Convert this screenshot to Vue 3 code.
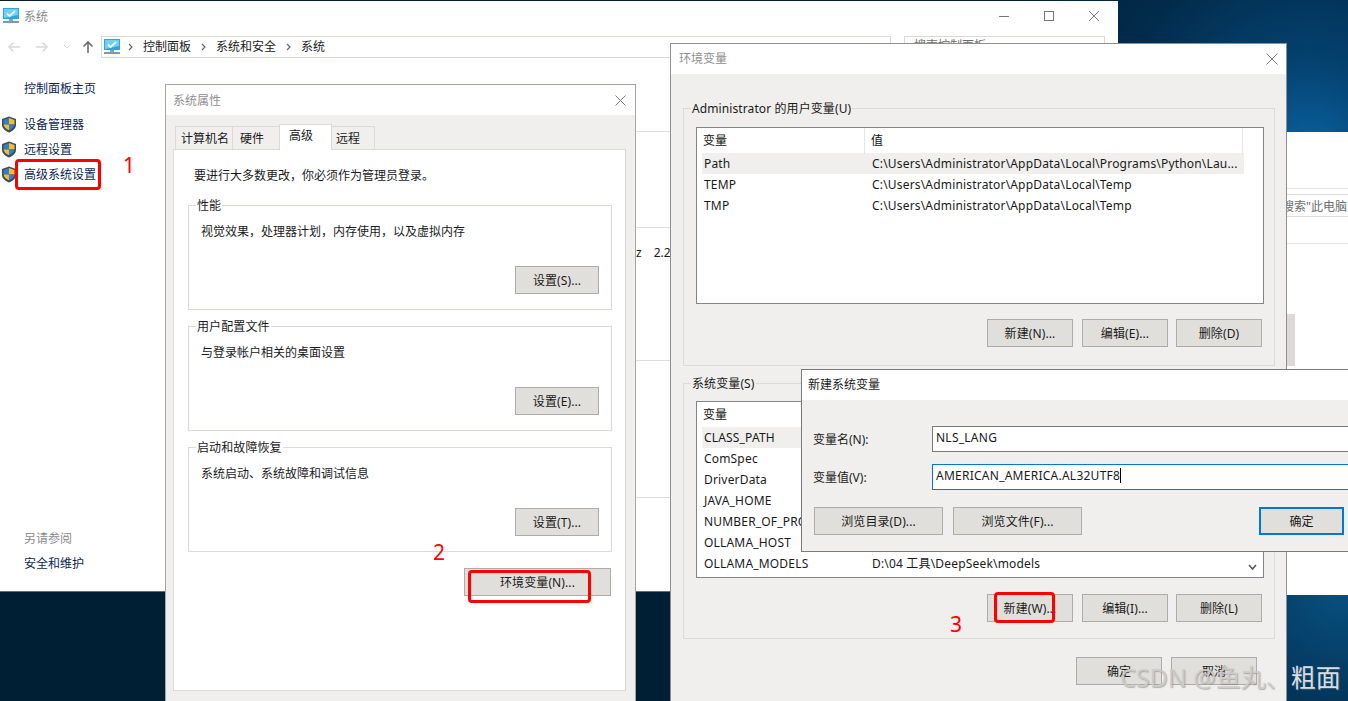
<template>
  <div class="desktop">
    <!-- window behind everything on the right -->
    <div class="back-window">
      <div class="back-line first"></div>
      <div class="back-search">搜索"此电脑</div>
      <div class="back-line second"></div>
      <div class="back-block"></div>
    </div>

    <!-- control panel -->
    <div class="main-window">
      <div class="main-title">
        <svg class="pc-icon" viewBox="0 0 16 16" width="16" height="16">
          <rect x="0" y="0" width="16" height="11" fill="#2aa5e8" />
          <path d="M1 1h14v6L1 10z" fill="#6fd0f7" />
          <path d="M4 5.500l2.600 2.600L12 3" fill="none" stroke="#fff" stroke-width="1.800" />
          <rect x="6" y="11" width="4" height="2" fill="#8fa3ad" />
          <rect x="0" y="13" width="16" height="2" fill="#7d9aa8" />
        </svg>
        <span class="main-name">系统</span>
        <div class="win-controls">
          <svg viewBox="0 0 10 10" width="10" height="10"><path d="M0 5.500h10" stroke="#777" /></svg>
          <svg viewBox="0 0 10 10" width="10" height="10"><rect x=".5" y=".5" width="9" height="9" fill="none" stroke="#777" /></svg>
          <svg viewBox="0 0 10 10" width="10" height="10"><path d="M0 0l10 10M10 0L0 10" stroke="#777" /></svg>
        </div>
      </div>

      <div class="nav-row">
        <div class="nav-arrows">
          <svg viewBox="0 0 14 12" width="14" height="12"><path d="M13 6H2M6.500 1.500L2 6l4.500 4.500" fill="none" stroke="#d8d8d8" stroke-width="1.500" /></svg>
          <svg viewBox="0 0 14 12" width="14" height="12"><path d="M1 6h11M7.500 1.500L12 6l-4.500 4.500" fill="none" stroke="#d8d8d8" stroke-width="1.500" /></svg>
          <svg viewBox="0 0 8 6" width="8" height="6"><path d="M1 1l3 3 3-3" fill="none" stroke="#d8d8d8" /></svg>
          <svg class="up-arrow" viewBox="0 0 12 14" width="12" height="14"><path d="M6 13V2M1.500 6.500L6 2l4.500 4.500" fill="none" stroke="#6e6e6e" stroke-width="1.600" /></svg>
        </div>
        <div class="crumbs">
          <svg class="pc-icon" viewBox="0 0 16 16" width="16" height="16">
            <rect x="0" y="0" width="16" height="11" fill="#2aa5e8" />
            <path d="M1 1h14v6L1 10z" fill="#6fd0f7" />
            <path d="M4 5.500l2.600 2.600L12 3" fill="none" stroke="#fff" stroke-width="1.800" />
            <rect x="6" y="11" width="4" height="2" fill="#8fa3ad" />
            <rect x="0" y="13" width="16" height="2" fill="#7d9aa8" />
          </svg>
          <template v-for="c in crumbs" :key="c">
            <svg class="crumb-sep" viewBox="0 0 5 8" width="5" height="8"><path d="M1 1l3 3-3 3" fill="none" stroke="#666" stroke-width="1.200" /></svg>
            <span class="crumb">{{ c }}</span>
          </template>
        </div>
        <div class="search-box">搜索控制面板</div>
      </div>

      <div class="main-body">
        <aside class="sidebar">
          <a class="side-home">控制面板主页</a>
          <div v-for="s in sideLinks" :key="s" class="side-link">
            <svg viewBox="0 0 16 17" width="16" height="17">
              <path d="M8 .5l7 2.500v6c0 3.500-3.500 6-7 7.500-3.500-1.500-7-4-7-7.500V3z" fill="#3f4b57" />
              <path d="M8 2L2.500 4v4.500H8z" fill="#2f7fd0" />
              <path d="M8 2l5.500 2v4.500H8z" fill="#f5bd2e" />
              <path d="M8 8.500H2.500c.3 2.500 2.800 4.600 5.500 5.800z" fill="#f5bd2e" />
              <path d="M8 8.500h5.500c-.3 2.500-2.800 4.600-5.500 5.800z" fill="#2f7fd0" />
            </svg>
            <a>{{ s }}</a>
          </div>
          <div class="side-foot">
            <div class="side-muted">另请参阅</div>
            <a class="side-bottom">安全和维护</a>
          </div>
        </aside>
        <div class="content">
          <div class="content-row r0"></div>
          <div class="content-row r1"></div>
          <div class="content-row r2"><span>z</span><span>2.2</span></div>
          <div class="content-row r3"></div>
        </div>
      </div>
    </div>

    <!-- system properties -->
    <div class="dialog props-dialog">
      <div class="dlg-title muted">
        <span>系统属性</span>
        <svg viewBox="0 0 11 11" width="11" height="11"><path d="M.5.500l10 10M10.500.500l-10 10" stroke="#777" /></svg>
      </div>
      <div class="tabs">
        <div
          v-for="t in tabs"
          :key="t.name"
          class="tab"
          :class="{ active: t.active }"
          :style="{ width: t.width + 'px', paddingLeft: t.pad + 'px' }"
        >{{ t.name }}</div>
      </div>
      <div class="tab-panel">
        <p class="admin-note">要进行大多数更改，你必须作为管理员登录。</p>
        <div v-for="g in propGroups" :key="g.title" class="group prop-group">
          <span class="legend white">{{ g.title }}</span>
          <p class="group-text">{{ g.text }}</p>
          <div class="group-actions"><button class="btn prop-btn">{{ g.btn }}</button></div>
        </div>
        <div class="env-row"><button class="btn env-btn">环境变量(N)...</button></div>
      </div>
    </div>

    <!-- environment variables -->
    <div class="dialog env-dialog">
      <div class="dlg-title muted env-title">
        <span>环境变量</span>
        <svg viewBox="0 0 12 12" width="12" height="12"><path d="M.5.500l11 11M11.500.500l-11 11" stroke="#777" /></svg>
      </div>
      <div class="env-body">
        <div class="group user-group">
          <span class="legend grey">Administrator 的用户变量(U)</span>
          <div class="var-list user-list">
            <div class="var-head"><span>变量</span><span>值</span></div>
            <div v-for="(r, i) in userVars" :key="r[0]" class="var-row" :class="{ selected: i === 0 }">
              <span>{{ r[0] }}</span><span>{{ r[1] }}</span>
            </div>
          </div>
          <div class="btn-row">
            <button class="btn">新建(N)...</button>
            <button class="btn">编辑(E)...</button>
            <button class="btn">删除(D)</button>
          </div>
        </div>
        <div class="group sys-group">
          <span class="legend grey">系统变量(S)</span>
          <div class="var-list sys-list">
            <div class="var-head"><span>变量</span><span>值</span></div>
            <div v-for="(r, i) in sysVars" :key="r[0]" class="var-row" :class="{ selected: i === 0 }">
              <span>{{ r[0] }}</span><span>{{ r[1] }}</span>
            </div>
            <svg class="scroll-down" viewBox="0 0 9 7" width="9" height="7"><path d="M1 1l3.500 4L8 1" fill="none" stroke="#555" stroke-width="1.500" /></svg>
          </div>
          <div class="btn-row sys-btns">
            <button class="btn">新建(W)...</button>
            <button class="btn">编辑(I)...</button>
            <button class="btn">删除(L)</button>
          </div>
        </div>
        <div class="env-foot">
          <button class="btn">确定</button>
          <button class="btn">取消</button>
        </div>
      </div>
    </div>

    <!-- new system variable -->
    <div class="dialog new-dialog">
      <div class="dlg-title new-title">新建系统变量</div>
      <div class="new-body">
        <div class="field">
          <label>变量名(N):</label>
          <div class="input">NLS_LANG</div>
        </div>
        <div class="field second-field">
          <label>变量值(V):</label>
          <div class="input focused">AMERICAN_AMERICA.AL32UTF8<i class="caret"></i></div>
        </div>
        <div class="new-actions">
          <button class="btn browse">浏览目录(D)...</button>
          <button class="btn browse">浏览文件(F)...</button>
          <button class="btn ok">确定</button>
        </div>
      </div>
    </div>

    <!-- red annotations -->
    <div class="mark box-1"></div>
    <div class="mark box-2"></div>
    <div class="mark box-3"></div>
    <span class="num n1">1</span>
    <span class="num n2">2</span>
    <span class="num n3">3</span>

    <div class="watermark">CSDN @鱼丸、<b>粗面</b></div>
  </div>
</template>

<script setup>
const crumbs = ['控制面板', '系统和安全', '系统']
const sideLinks = ['设备管理器', '远程设置', '高级系统设置']

const tabs = [
  { name: '计算机名', width: 58, pad: 5 },
  { name: '硬件', width: 47, pad: 7 },
  { name: '高级', width: 53, pad: 9, active: true },
  { name: '远程', width: 43, pad: 4 }
]

const propGroups = [
  { title: '性能', text: '视觉效果，处理器计划，内存使用，以及虚拟内存', btn: '设置(S)...' },
  { title: '用户配置文件', text: '与登录帐户相关的桌面设置', btn: '设置(E)...' },
  { title: '启动和故障恢复', text: '系统启动、系统故障和调试信息', btn: '设置(T)...' }
]

const tempDir = 'C:\\Users\\Administrator\\AppData\\Local\\Temp'
const userVars = [
  ['Path', 'C:\\Users\\Administrator\\AppData\\Local\\Programs\\Python\\Lau...'],
  ['TEMP', tempDir],
  ['TMP', tempDir]
]

const sysVars = [
  ['CLASS_PATH', ''],
  ['ComSpec', ''],
  ['DriverData', ''],
  ['JAVA_HOME', ''],
  ['NUMBER_OF_PROCESSORS', ''],
  ['OLLAMA_HOST', ''],
  ['OLLAMA_MODELS', 'D:\\04 工具\\DeepSeek\\models']
]
</script>

<style>
html, body {
  margin: 0;
  overflow: hidden;
}
</style>

<style scoped>
.desktop {
  position: relative;
  width: 1348px;
  height: 701px;
  overflow: hidden;
  font-family: "Noto Sans", "Noto Sans CJK SC", sans-serif;
  font-size: 12px;
  line-height: 16px;
  color: #1a1a1a;
  background:
    radial-gradient(circle at 1310px 150px, #0a619f 0, #04416f 90px, #022c4c 200px, transparent 330px),
    radial-gradient(circle at 1340px 590px, #08507f 0, #03365c 110px, transparent 260px),
    #001f35;
}

/* back window */
.back-window {
  position: absolute;
  left: 1118px;
  right: 0;
  top: 132px;
  height: 463px;
  background: #fff;
}
.back-line {
  border-top: 1px solid #e3e3e3;
}
.back-line.first {
  margin-top: 56px;
}
.back-search {
  margin-top: 5px;
  height: 21px;
  line-height: 23px;
  padding-left: 164px;
  color: #6d6d6d;
  border-top: 1px solid #dcdcdc;
  border-bottom: 1px solid #dcdcdc;
}
.back-line.second {
  margin-top: 26px;
}
.back-block {
  margin-top: 70px;
  width: 177px;
  height: 52px;
  background: #dcd9d6;
}

/* main window */
.main-window {
  position: absolute;
  left: 0;
  top: 1px;
  width: 1118px;
  height: 591px;
  background: #fff;
  border-bottom: 1px solid #6b6b6b;
  box-sizing: border-box;
  display: flex;
  flex-direction: column;
}
.main-title {
  display: flex;
  align-items: center;
  height: 30px;
  padding-left: 3px;
}
.main-name {
  margin: 1px 0 0 5px;
  color: #8a8a8a;
}
.win-controls {
  margin-left: auto;
  display: flex;
  gap: 35px;
  padding-right: 19px;
}
.nav-row {
  display: flex;
  align-items: center;
  height: 22px;
  margin-top: 5px;
  line-height: 18px;
}
.nav-arrows {
  width: 101px;
  display: flex;
  align-items: center;
  gap: 14px;
  padding-left: 7px;
  box-sizing: border-box;
}
.up-arrow {
  margin-left: -3px;
}
.crumbs {
  width: 790px;
  height: 22px;
  box-sizing: border-box;
  border: 1px solid #dcdad5;
  display: flex;
  align-items: center;
  padding-left: 2px;
  overflow: hidden;
}
.crumb-sep {
  margin: 0 10px;
}
.pc-icon + .crumb-sep {
  margin-left: 8px;
}
.crumb {
  color: #222;
}
.search-box {
  margin-left: 13px;
  width: 201px;
  height: 22px;
  box-sizing: border-box;
  border: 1px solid #dcdad5;
  padding-left: 9px;
  color: #6d6d6d;
}
.main-body {
  flex: 1;
  display: flex;
  min-height: 0;
}
.sidebar {
  width: 165px;
  padding-top: 23px;
  display: flex;
  flex-direction: column;
  box-sizing: border-box;
  padding-bottom: 19px;
  color: #0a1f55;
}
.side-home {
  padding-left: 24px;
  margin-bottom: 15px;
}
.side-link {
  display: flex;
  align-items: center;
  height: 25px;
  padding-left: 1px;
}
.side-link svg {
  margin-right: 7px;
}
.side-foot {
  margin-top: auto;
  padding-left: 24px;
}
.side-muted {
  color: #8c8c8c;
  margin-bottom: 9px;
}
.content {
  flex: 1;
}
.content-row {
  box-sizing: border-box;
  border-bottom: 1px solid #dedede;
}
.content-row.r0 {
  height: 74px;
}
.content-row.r1 {
  height: 96px;
}
.content-row.r2 {
  height: 133px;
  padding: 17px 0 0 471px;
  display: flex;
  gap: 12px;
}
.content-row.r3 {
  height: 137px;
}

/* dialogs */
.dialog {
  position: absolute;
  box-sizing: border-box;
  background: #f0efed;
}
.dlg-title {
  display: flex;
  align-items: center;
  justify-content: space-between;
  background: #fff;
  padding-left: 7px;
}
.dlg-title.muted {
  color: #8f8f8f;
}
.props-dialog {
  left: 165px;
  top: 84px;
  width: 471px;
  height: 640px;
  border: 1px solid #a8a6a1;
}
.props-dialog .dlg-title {
  box-sizing: border-box;
  height: 30px;
  padding-top: 2px;
  padding-right: 9px;
}
.props-dialog .dlg-title svg {
  margin-top: -2px;
}
.tabs {
  display: flex;
  align-items: flex-end;
  height: 25px;
  margin: 9px 0 0 9px;
}
.tab {
  box-sizing: border-box;
  height: 23px;
  line-height: 24px;
  border: 1px solid #dcdad5;
  border-bottom: 0;
  border-left-width: 0;
  background: #f0efed;
}
.tab:first-child {
  border-left-width: 1px;
}
.tab.active {
  position: relative;
  height: 26px;
  margin-bottom: -1px;
  line-height: 22px;
  background: #fff;
  border-left-width: 1px;
  margin-left: -1px;
  z-index: 1;
}
.tab-panel {
  width: 453px;
  height: 542px;
  margin-left: 7px;
  box-sizing: border-box;
  background: #fff;
  border: 1px solid #dcdad5;
  padding: 18px 13px 0 14px;
}
.admin-note {
  margin: 0 0 21px 6px;
}
.group {
  border: 1px solid #dcdad5;
  box-sizing: border-box;
}
.legend {
  display: block;
  width: fit-content;
  margin-top: -8px;
  padding: 0 1px;
  letter-spacing: 0.1px;
}
.legend.white {
  background: #fff;
  margin-left: 7px;
}
.legend.grey {
  background: #f0efed;
  margin-left: 7px;
}
.prop-group {
  width: 424px;
  height: 105px;
  margin-bottom: 16px;
}
.group-text {
  margin: 10px 0 0 12px;
}
.group-actions {
  display: flex;
  justify-content: flex-end;
  margin: 26px 12px 0 0;
}
.btn {
  box-sizing: border-box;
  width: 86px;
  height: 28px;
  padding: 1px 0 0;
  border: 1px solid #aeaca6;
  background: #e1dfdb;
  font: inherit;
  letter-spacing: 0.1px;
  color: #1a1a1a;
}
.prop-btn {
  width: 84px;
}
.env-row {
  display: flex;
  justify-content: flex-end;
  margin-right: 1px;
}
.env-btn {
  width: 147px;
}

/* environment dialog */
.env-dialog {
  left: 670px;
  top: 43px;
  width: 617px;
  height: 700px;
  border: 1px solid #8f8f8f;
}
.env-title {
  height: 30px;
  padding: 0 8px;
}
.env-body {
  padding: 34px 0 0 12px;
}
.user-group {
  width: 592px;
  height: 258px;
}
.sys-group {
  width: 592px;
  height: 256px;
  margin-top: 17px;
}
.var-list {
  position: relative;
  box-sizing: border-box;
  width: 568px;
  margin: 10px 0 0 12px;
  background: #fff;
  border: 1px solid #82858a;
}
.user-list {
  height: 177px;
}
.sys-list {
  height: 177px;
  margin-top: 9px;
}
.var-head {
  display: grid;
  grid-template-columns: 168px 378px;
  height: 25px;
  line-height: 26px;
  width: 546px;
}
.var-head span {
  padding-left: 6px;
  border-right: 1px solid #e5e5e5;
  color: #111;
}
.var-row {
  display: grid;
  grid-template-columns: 165px 1fr;
  height: 21px;
  line-height: 22px;
  width: 542px;
  margin-left: 5px;
  white-space: nowrap;
  letter-spacing: 0.18px;
}
.var-row span {
  padding-left: 2px;
  overflow: hidden;
}
.var-row span + span {
  padding-left: 5px;
}
.var-row.selected {
  background: #f0efed;
}
.scroll-down {
  position: absolute;
  right: 6px;
  bottom: 6px;
}
.btn-row {
  display: flex;
  justify-content: flex-end;
  gap: 8px;
  margin: 15px 12px 0 0;
}
.btn-row .btn:first-child {
  margin-right: 1px;
}
.sys-btns {
  margin-top: 16px;
}
.env-foot {
  display: flex;
  justify-content: flex-end;
  gap: 9px;
  margin-top: 18px;
  width: 574px;
}

/* new variable dialog */
.new-dialog {
  left: 801px;
  top: 369px;
  width: 570px;
  height: 183px;
  border: 1px solid #7a7a7a;
}
.new-title {
  height: 30px;
  padding-left: 6px;
  color: #1a1a1a;
}
.new-body {
  padding: 26px 0 0 11px;
}
.field {
  display: flex;
  align-items: center;
}
.second-field {
  margin-top: 12px;
}
.field label {
  width: 119px;
  padding-top: 2px;
}
.input {
  width: 430px;
  height: 26px;
  line-height: 22px;
  box-sizing: border-box;
  background: #fff;
  border: 1px solid #7a7a7a;
  padding-left: 3px;
  white-space: nowrap;
  letter-spacing: 0.25px;
}
.input.focused {
  border-color: #0078d7;
}
.caret {
  display: inline-block;
  width: 1px;
  height: 15px;
  vertical-align: -3px;
  background: #000;
}
.new-actions {
  display: flex;
  margin: 17px 0 0 1px;
  gap: 10px;
}
.browse {
  width: 129px;
}
.ok {
  width: 85px;
  margin-left: 167px;
  border: 2px solid #0078d7;
}

/* annotations */
.mark {
  position: absolute;
  box-sizing: border-box;
  border: 3px solid #f00;
  border-radius: 4px;
}
.box-1 {
  left: 15px;
  top: 159px;
  width: 86px;
  height: 31px;
}
.box-2 {
  left: 468px;
  top: 570px;
  width: 123px;
  height: 33px;
}
.box-3 {
  left: 994px;
  top: 592px;
  width: 61px;
  height: 31px;
}
.num {
  position: absolute;
  color: #f00;
  font-size: 21px;
  line-height: 24px;
}
.n1 { left: 123px; top: 153px; }
.n2 { left: 433px; top: 540px; }
.n3 { left: 950px; top: 612px; }

.watermark {
  position: absolute;
  left: 1120px;
  top: 660px;
  font-size: 25px;
  line-height: 34px;
  white-space: nowrap;
  color: rgba(205, 205, 205, 0.9);
  text-shadow: 1px 1px 1px rgba(120, 120, 120, 0.5);
}
.watermark b {
  font-weight: 400;
  color: #d6dde3;
}
</style>
